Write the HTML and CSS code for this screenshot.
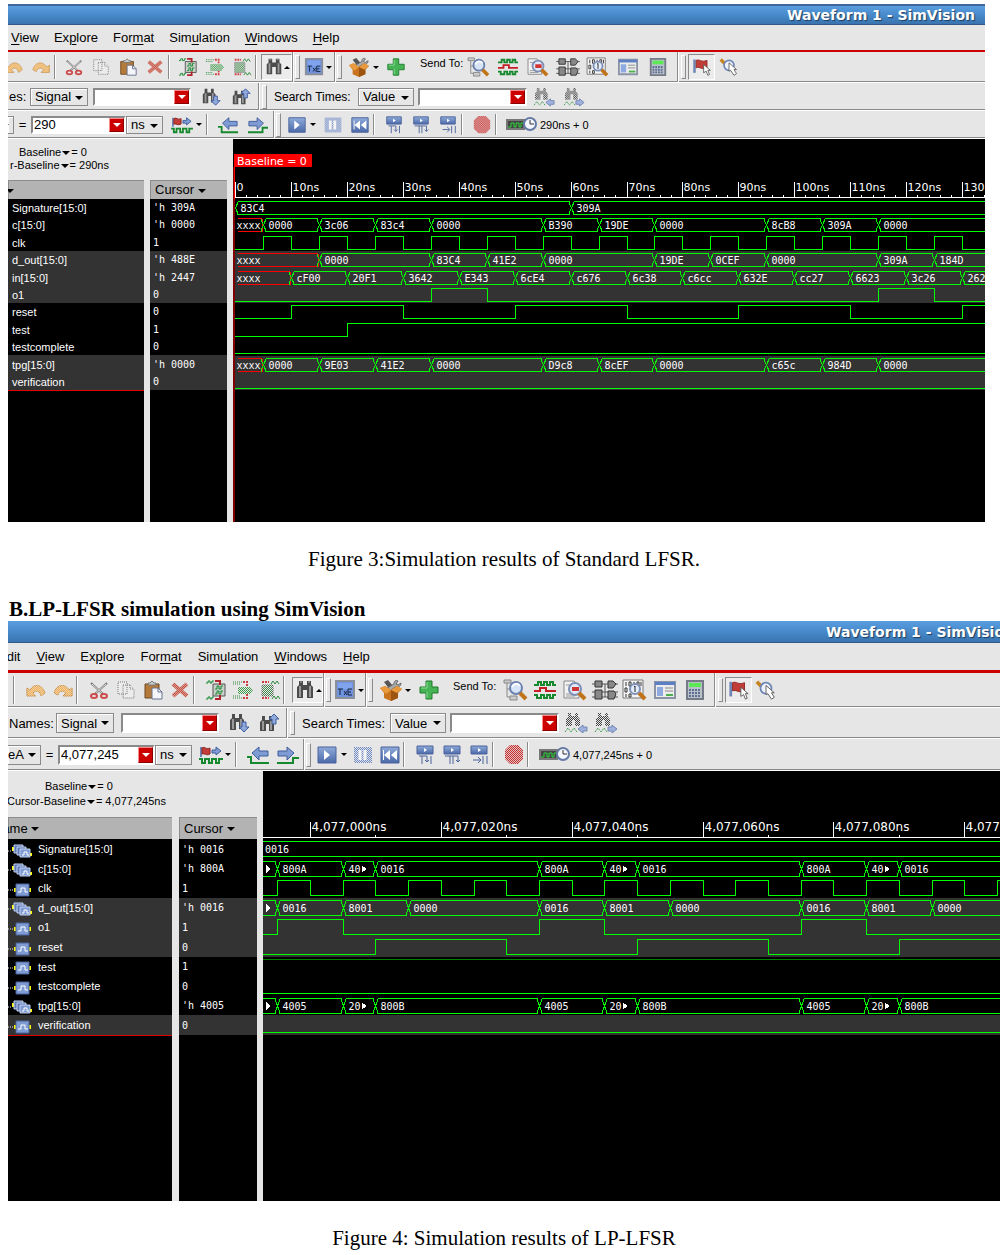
FILE: index.html
```html
<!DOCTYPE html>
<html lang="en">
<head>
<meta charset="utf-8">
<title>LFSR simulation results</title>
<link rel="stylesheet" href="styles.css">
</head>
<body>
<svg class="sprite" aria-hidden="true">
  <defs>
    <pattern id="dots" width="2" height="2" patternUnits="userSpaceOnUse"><path d="M0 0h1v1h-1zM1 1h1v1h-1z" fill="#e6e6e6"/></pattern>
    <linearGradient id="blue" x2="0" y2="1"><stop stop-color="#8fabda"/><stop offset="1" stop-color="#4b69a8"/></linearGradient>
  </defs>
  <symbol id="undo" viewBox="0 0 22 22"><path d="M2 17V9l3 2c3-6 12-7 15 3l-4 3c-1-5-5-6-8-3l3 3z" fill="#f2b45c" stroke="#c98a3c"/><path d="M2 5h19v13H2z" fill="url(#dots)" opacity=".5"/></symbol>
  <symbol id="redo" viewBox="0 0 22 22"><path d="M20 17V9l-3 2C14 5 5 4 2 14l4 2c1-4 5-5 8-2l-3 3z" fill="#f2b45c" stroke="#c98a3c"/><path d="M1 5h19v13H1z" fill="url(#dots)" opacity=".5"/></symbol>
  <symbol id="cut" viewBox="0 0 22 22"><path d="M3 4l12 11M19 4L7 15" stroke="#777" stroke-width="2"/><path d="M4 5l10 9M18 5L8 14" stroke="#ddd"/><ellipse cx="6" cy="17" rx="3" ry="2" fill="none" stroke="#cc4c4c" stroke-width="2"/><ellipse cx="16" cy="17" rx="3" ry="2" fill="none" stroke="#cc4c4c" stroke-width="2"/></symbol>
  <symbol id="copy" viewBox="0 0 22 22"><g fill="#ececec" stroke="#777" stroke-dasharray="1 1"><path d="M3 3h9v12H3zM8 6h7l4 4v9H8z"/><path d="M15 6v4h4"/></g></symbol>
  <symbol id="paste" viewBox="0 0 22 22"><path d="M3 5h14v14H3z" fill="#b47a3c" stroke="#6f4a22"/><path d="M6 6V4h2l2-2 2 2h2v2z" fill="#ccc" stroke="#777"/><path d="M10 9h6l4 4v7H10z" fill="#f4f6fb" stroke="#66728c"/><path d="M16 9v4h4" fill="none" stroke="#66728c"/></symbol>
  <symbol id="del" viewBox="0 0 22 22"><path d="M4 5l14 12M18 5L4 17" stroke="#c8503f" stroke-width="4"/><path d="M2 2h18v18H2z" fill="url(#dots)" opacity=".5"/></symbol>
  <symbol id="wave-in" viewBox="0 0 22 22"><path d="M8 5h12v12H8z" fill="#c9cfc9" stroke="#555"/><path d="M10 10h2V7h2v3h2V7h2M10 15h2v-3h2v3h2v-3h2M1 4h2V2h2v2h2V2h2M1 20h2v-2h2v2h2v-2h2" fill="none" stroke="#128a2c"/><path d="M10 2h5v4M10 20h5v-4" fill="none" stroke="#b3202a" stroke-width="2"/></symbol>
  <symbol id="wave-mid" viewBox="0 0 22 22"><path d="M1 3h9M1 5h8M1 17h8M1 19h9" stroke="#2d8a3c" stroke-dasharray="1 1"/><path d="M11 3h4v4M11 19h4v-4" fill="none" stroke="#cf3e3e" stroke-width="2" stroke-dasharray="2 1"/><path d="M6 8h12l3 3-3 4H6z" fill="#3f9b4a"/><path d="M6 8h15v7H6z" fill="url(#dots)"/></symbol>
  <symbol id="wave-out" viewBox="0 0 22 22"><path d="M3 6h11v11H3z" fill="#3f8a4a" stroke="#555"/><path d="M1 5h14v13H1z" fill="url(#dots)"/><path d="M3 3h7M3 19h7" stroke="#cf3e3e" stroke-width="2" stroke-dasharray="2 1"/><path d="M12 5l2-3 2 3 2-3 2 3M13 20l2-3 2 3 2-3 2 3" fill="none" stroke="#2d8a3c"/></symbol>
  <symbol id="binoc" viewBox="0 0 22 22"><path d="M5 2h4v4h4V2h4v4l2 2v11h-6v-8H9v8H3V8l2-2z" fill="#4c4c4c"/><path d="M6 7v11M16 7v11" stroke="#999" stroke-width="2"/><path d="M6 3h2M14 3h2" stroke="#aaa"/></symbol>
  <symbol id="txe" viewBox="0 0 22 22"><path d="M2 2h18v17H2z" fill="#6f93df" stroke="#8a8f9a" stroke-width="2"/><path d="M4 4h14v6H4z" fill="#7fa3ec"/><path d="M4 10h5M6 10v6M10 12l3 4M13 12l-3 4M18 10h-4v6h4M14 13h3" stroke="#16233f" fill="none"/></symbol>
  <symbol id="box" viewBox="0 0 24 22"><path d="M5 3l4-2 5 6-3 4z" fill="#555"/><path d="M8 9l7-4c0-4 3-4 4-3l-2 3 2 1 3-2c0 4-4 5-6 4l-6 5z" fill="#aaa" stroke="#666"/><path d="M1 9l5-2 6 4 6-4 5 3-4 4v5l-7 3-7-3v-5z" fill="#c9731c"/><path d="M12 11v11l7-3v-7z" fill="#9c5410"/><path d="M1 9l5-2 6 4-5 4zM23 10l-5-3-6 4 6 3z" fill="#e99a3c"/></symbol>
  <symbol id="plus" viewBox="0 0 22 22"><path d="M8 2h6v6h6v6h-6v6H8v-6H2V8h6z" fill="#46b454" stroke="#1d7a2b"/><path d="M9 13v6M9 3v6H3" fill="none" stroke="#8fdc98"/></symbol>
  <symbol id="tree" viewBox="0 0 26 22"><path d="M2 1h7v3H2zM8 17h7v4H8z" fill="#ccc" stroke="#888"/><path d="M5 4v14h3M5 10h4" fill="none" stroke="#888"/><circle cx="14" cy="9" r="6" fill="#d7e4f7" stroke="#6b82b0" stroke-width="2"/><path d="M10 8c2-4 6-4 8-1" stroke="#fff" stroke-width="2" fill="none"/><path d="M18 14l6 6" stroke="#c07318" stroke-width="4"/></symbol>
  <symbol id="waves" viewBox="0 0 26 22"><path d="M2 6h4V3h3v3h3V3h3v3h3V3h3v3h3M2 16h3v3h4v-3h3v3h3v-3h3v3h3v-3h3" fill="none" stroke="#16882e" stroke-width="2"/><path d="M2 12h6V9h6v3h10" fill="none" stroke="#c32025" stroke-width="2"/></symbol>
  <symbol id="docfind" viewBox="0 0 26 22"><path d="M2 2h10l5 5v12H2z" fill="#f2f2f2" stroke="#888"/><path d="M4 6h6M4 15h11M4 17h9" stroke="#999"/><circle cx="13" cy="10" r="6" fill="#dfe9f9" stroke="#7d8fb5" stroke-width="2"/><path d="M10 9h7M10 11h7" stroke="#cf3535" stroke-width="2"/><path d="M17 14l6 6" stroke="#c07318" stroke-width="4"/></symbol>
  <symbol id="schem" viewBox="0 0 26 22"><path d="M0 5h26M0 13h26M0 18h26M13 5v13" stroke="#555"/><g fill="#888" stroke="#333"><path d="M3 2h7v6H3zM16 2h5l3 3-3 4h-5zM3 11h7v9H3zM16 12h6l2 3-2 5h-6z"/></g></symbol>
  <symbol id="bits" viewBox="0 0 26 22"><path d="M1 1h20v18H1z" fill="#f4f4f4" stroke="#777"/><path d="M4 3v4M7 3h2v4H7zM12 3v4M15 3h2v4h-2zM19 3v4M3 9h2v4H3zM4 15v3M7 15h2v3H7z" fill="none" stroke="#333"/><circle cx="13" cy="10" r="5" fill="#e4edfb" stroke="#7d8fb5" stroke-width="2"/><path d="M12 8l1-1v6" fill="none" stroke="#222"/><path d="M17 14l6 6" stroke="#c07318" stroke-width="4"/></symbol>
  <symbol id="list" viewBox="0 0 26 22"><path d="M3 3h20v16H3z" fill="#ececec" stroke="#8a93a5" stroke-width="2"/><path d="M3 3h20v3H3z" fill="#5b7ec4"/><path d="M5 8h6v9H5z" fill="#8faae0"/><path d="M13 9h8M13 12h8" stroke="#888"/><path d="M14 16h7" stroke="#4bb04b" stroke-width="2"/></symbol>
  <symbol id="calc" viewBox="0 0 26 22"><path d="M5 2h16v18H5z" fill="#b9c0ca" stroke="#747b86" stroke-width="2"/><path d="M7 4h12v4H7z" fill="#5bea55"/><path d="M7 11h12M7 14h12M7 17h12" stroke="#5d6f92" stroke-width="2" stroke-dasharray="2 1"/></symbol>
  <symbol id="flag" viewBox="0 0 24 22"><path d="M3 2v16" stroke="#6d86b5" stroke-width="3"/><path d="M5 3c4-2 6 3 13 0v9c-6 3-9-2-13 0z" fill="#c33d38" stroke="#8c2521"/><path d="M14 8v10l3-2 2 5 2-1-2-5h3z" fill="#fff" stroke="#555"/></symbol>
  <symbol id="magcur" viewBox="0 0 24 22"><path d="M2 2l5 5" stroke="#c78420" stroke-width="4"/><circle cx="12" cy="9" r="6" fill="#eef3fb" stroke="#6d86b5" stroke-width="2"/><path d="M12 6v10l2-1 4 6 3-2-3-5h3z" fill="#fff" stroke="#555"/></symbol>
  <symbol id="find-down" viewBox="0 0 22 22"><path d="M4 2h3v4h4V2h3v4l2 2v9h-5v-7H8v8H2V8l2-2z" fill="#4c4c4c"/><path d="M5 7v10M13 7v9" stroke="#999" stroke-width="2"/><path d="M14 10h4v5h3l-5 5-5-5h3z" fill="#8fa9dd" stroke="#3f5d9b"/></symbol>
  <symbol id="find-up" viewBox="0 0 22 22"><path d="M4 4h3v4h4V4h3v4l2 2v9h-5v-7H8v7H2v-9l2-2z" fill="#4c4c4c"/><path d="M5 9v9M13 9v9" stroke="#999" stroke-width="2"/><path d="M14 12h4V7h3l-5-5-5 5h3z" fill="#8fa9dd" stroke="#3f5d9b"/></symbol>
  <symbol id="find-prev" viewBox="0 0 26 22"><path d="M4 1h3v3h4V1h3v4l2 2v7h-5V8H8v6H2V7l2-2z" fill="#444"/><path d="M1 0h16v15H1z" fill="url(#dots)"/><path d="M1 20l3-4 3 4 3-4 3 4" fill="none" stroke="#3f9b4a" stroke-dasharray="2 1"/><path d="M14 17l5-4v2h4v4h-4v2z" fill="#9fb1dc" stroke="#7488b5"/></symbol>
  <symbol id="find-next" viewBox="0 0 26 22"><path d="M4 1h3v3h4V1h3v4l2 2v7h-5V8H8v6H2V7l2-2z" fill="#444"/><path d="M1 0h16v15H1z" fill="url(#dots)"/><path d="M1 20l3-4 3 4 3-4 3 4" fill="none" stroke="#3f9b4a" stroke-dasharray="2 1"/><path d="M23 17l-5-4v2h-4v4h4v2z" fill="#9fb1dc" stroke="#7488b5"/></symbol>
  <symbol id="marker" viewBox="0 0 26 22"><path d="M3 3v10" stroke="#6d86b5" stroke-width="2"/><path d="M4 4c3-2 4 2 8 0v6c-4 2-5-1-8 0z" fill="#c33d38" stroke="#8c2521"/><path d="M14 6h4V3l5 4-5 4V9h-4z" fill="#7f9bd3" stroke="#3f5d9b"/><path d="M1 15h3v4h3v-4h4v4h3v-4h4v4h3v-4h4" fill="none" stroke="#16882e" stroke-width="2"/></symbol>
  <symbol id="edge-left" viewBox="0 0 26 22"><path d="M2 13h4v6h18" fill="none" stroke="#16882e" stroke-width="2"/><path d="M7 9l7-6v4h9v5h-9v4z" fill="#7f9bd3" stroke="#3f5d9b"/></symbol>
  <symbol id="edge-right" viewBox="0 0 26 22"><path d="M2 19h16v-5h6" fill="none" stroke="#16882e" stroke-width="2"/><path d="M19 9l-7-6v4H3v5h9v4z" fill="#7f9bd3" stroke="#3f5d9b"/></symbol>
  <symbol id="play" viewBox="0 0 22 22"><path d="M2 3h18v16H2z" fill="url(#blue)" stroke="#4a629b"/><path d="M8 6l6 5-6 5z" fill="#fff"/></symbol>
  <symbol id="pause" viewBox="0 0 22 22"><path d="M2 3h18v16H2z" fill="#6c88c6"/><path d="M2 3h18v16H2z" fill="url(#dots)"/><path d="M8 6v10M13 6v10" stroke="#f4f4f4" stroke-width="3"/></symbol>
  <symbol id="rewind" viewBox="0 0 22 22"><path d="M2 3h18v16H2z" fill="url(#blue)" stroke="#4a629b"/><path d="M11 6v10l-6-5zM18 6v10l-6-5zM4 6h1v10H4z" fill="#fff"/></symbol>
  <symbol id="step-into" viewBox="0 0 22 22"><path d="M3 2h16v8H3z" fill="url(#blue)" stroke="#4a629b"/><path d="M10 4l3 2-3 2z" fill="#fff"/><path d="M5 12h8v6M8 12v8M17 12v8M11 16l2 2 2-2" fill="none" stroke="#4a629b"/></symbol>
  <symbol id="step-over" viewBox="0 0 22 22"><path d="M3 2h16v8H3z" fill="url(#blue)" stroke="#4a629b"/><path d="M10 4l3 2-3 2z" fill="#fff"/><path d="M4 12h13v6M9 12v8M12 12v8M15 16l2 2 2-2" fill="none" stroke="#4a629b"/></symbol>
  <symbol id="step-out" viewBox="0 0 22 22"><path d="M3 2h16v8H3z" fill="url(#blue)" stroke="#4a629b"/><path d="M10 4l3 2-3 2z" fill="#fff"/><path d="M5 16h7M10 13l3 3-3 3M15 12v8M19 12v8" fill="none" stroke="#4a629b"/></symbol>
  <symbol id="stop" viewBox="0 0 22 22"><path d="M7 1h8l5 5v9l-5 5H7l-5-5V6z" fill="#c93030"/><path d="M1 1h20v20H1z" fill="url(#dots)" opacity=".8"/></symbol>
  <symbol id="timer" viewBox="0 0 32 18"><path d="M1 4h17v9H1z" fill="#444" stroke="#777" stroke-width="2"/><path d="M2 11h3V7h3v4h2V7h3v4h2V7h3" fill="none" stroke="#2dd53a"/><circle cx="24" cy="8" r="6" fill="#f3f6fc" stroke="#6579a5" stroke-width="2"/><path d="M24 4v4h4" fill="none" stroke="#333"/></symbol>
  <symbol id="sig-wire" viewBox="0 0 26 14"><path d="M0 7h6" stroke="#ddd" stroke-dasharray="1 1"/><path d="M6 5h2v4H6zM21 5h2v4h-2z" fill="#ff0"/><path d="M8 1h13v12H8z" fill="#7f9bd3" stroke="#4a629b"/><path d="M10 9h3V5h4v4h3" fill="none" stroke="#fff"/></symbol>
  <symbol id="sig-bus" viewBox="0 0 26 14"><path d="M0 7h4" stroke="#ddd" stroke-dasharray="1 1"/><path d="M4 3h2v4H4zM22 9h2v3h-2z" fill="#ff0"/><path d="M6 1h9v8H6z" fill="#5c78b5" stroke="#c4d2f0"/><path d="M9 3h9v8H9z" fill="#5c78b5" stroke="#c4d2f0"/><path d="M12 5h10v8H12z" fill="#7f9bd3" stroke="#c4d2f0"/><path d="M14 11h2V8h3v3h2" fill="none" stroke="#fff"/></symbol>
</svg>

<main>
<figure class="shot first">
  <section class="window" aria-label="Standard LFSR waveform window">
    <header class="titlebar"><h2>Waveform 1 - SimVision</h2></header>
    <nav class="menu">
      <button><u>V</u>iew</button><button>Ex<u>p</u>lore</button><button>For<u>m</u>at</button><button>Sim<u>u</u>lation</button><button><u>W</u>indows</button><button><u>H</u>elp</button>
    </nav>
    <div class="bar main-bar">
      <button class="tool" aria-label="Undo"><svg><use href="#undo"/></svg></button>
      <button class="tool" aria-label="Redo"><svg><use href="#redo"/></svg></button>
      <i class="sep"></i>
      <button class="tool" aria-label="Cut"><svg><use href="#cut"/></svg></button>
      <button class="tool" aria-label="Copy"><svg><use href="#copy"/></svg></button>
      <button class="tool" aria-label="Paste"><svg><use href="#paste"/></svg></button>
      <button class="tool" aria-label="Delete"><svg><use href="#del"/></svg></button>
      <i class="sep"></i>
      <button class="tool" aria-label="Group waves"><svg><use href="#wave-in"/></svg></button>
      <button class="tool" aria-label="Merge waves"><svg><use href="#wave-mid"/></svg></button>
      <button class="tool" aria-label="Ungroup waves"><svg><use href="#wave-out"/></svg></button>
      <i class="sep"></i>
      <button class="tool pressed find" aria-label="Find"><svg><use href="#binoc"/></svg><i class="tri up"></i></button>
      <i class="grip"></i>
      <button class="tool drop" aria-label="Text"><svg><use href="#txe"/></svg><i class="tri small"></i></button>
      <i class="grip"></i>
      <button class="tool kit" aria-label="Tools"><svg><use href="#box"/></svg><i class="tri small"></i></button>
      <button class="tool" aria-label="Add"><svg><use href="#plus"/></svg></button>
      <span class="send">Send To:</span>
      <button class="tool wide" aria-label="Design browser"><svg><use href="#tree"/></svg></button>
      <button class="tool wide" aria-label="Waveform"><svg><use href="#waves"/></svg></button>
      <button class="tool wide" aria-label="Source browser"><svg><use href="#docfind"/></svg></button>
      <button class="tool wide" aria-label="Schematic"><svg><use href="#schem"/></svg></button>
      <button class="tool wide" aria-label="Memory viewer"><svg><use href="#bits"/></svg></button>
      <button class="tool wide" aria-label="Watch"><svg><use href="#list"/></svg></button>
      <button class="tool wide" aria-label="Calculator"><svg><use href="#calc"/></svg></button>
      <i class="grip spaced"></i>
      <button class="tool pressed" aria-label="Select mode"><svg><use href="#flag"/></svg></button>
      <button class="tool" aria-label="Zoom mode"><svg><use href="#magcur"/></svg></button>
    </div>
    <div class="bar search-bar">
      <label class="lead" for="a-kind">es:</label>
      <span class="pick kind"><select id="a-kind"><option>Signal</option></select></span>
      <span class="combo names"><input type="text" aria-label="Names"><button aria-label="Name history"></button></span>
      <button class="tool search" aria-label="Find next name"><svg><use href="#find-down"/></svg></button>
      <button class="tool search" aria-label="Find previous name"><svg><use href="#find-up"/></svg></button>
      <i class="grip spaced"></i>
      <label class="times" for="a-value">Search Times:</label>
      <span class="pick value"><select id="a-value"><option>Value</option></select></span>
      <span class="combo find-value"><input type="text" aria-label="Value"><button aria-label="Value history"></button></span>
      <button class="tool wide" aria-label="Previous time"><svg><use href="#find-prev"/></svg></button>
      <button class="tool wide" aria-label="Next time"><svg><use href="#find-next"/></svg></button>
    </div>
    <div class="bar time-bar">
      <span class="pick marker"><select aria-label="Cursor"><option></option></select></span>
      <span class="equals">=</span>
      <span class="combo time"><input type="text" aria-label="Cursor time" value="290"><button aria-label="Time history"></button></span>
      <span class="pick unit"><select aria-label="Unit"><option>ns</option></select></span>
      <button class="tool mark" aria-label="Markers"><svg><use href="#marker"/></svg><i class="tri small"></i></button>
      <i class="sep"></i>
      <button class="tool wide" aria-label="Previous edge"><svg><use href="#edge-left"/></svg></button>
      <button class="tool wide" aria-label="Next edge"><svg><use href="#edge-right"/></svg></button>
      <i class="grip"></i>
      <button class="tool run" aria-label="Run"><svg><use href="#play"/></svg><i class="tri small"></i></button>
      <button class="tool" aria-label="Pause"><svg><use href="#pause"/></svg></button>
      <button class="tool" aria-label="Reset"><svg><use href="#rewind"/></svg></button>
      <i class="sep"></i>
      <button class="tool" aria-label="Step into"><svg><use href="#step-into"/></svg></button>
      <button class="tool" aria-label="Step over"><svg><use href="#step-over"/></svg></button>
      <button class="tool" aria-label="Step out"><svg><use href="#step-out"/></svg></button>
      <i class="sep"></i>
      <button class="tool" aria-label="Stop"><svg><use href="#stop"/></svg></button>
      <i class="sep"></i>
      <svg class="timer" aria-hidden="true"><use href="#timer"/></svg>
      <output>290ns + 0</output>
    </div>
    <div class="panes">
      <div class="side">
        <div class="info"><p class="base">Baseline<i class="tri small"></i>= 0</p><p class="delta">r-Baseline<i class="tri small"></i>= 290ns</p></div>
        <table>
          <thead><tr><th class="name"><span><i class="tri"></i></span></th><th class="cursor">Cursor <i class="tri"></i></th></tr></thead>
          <tbody>
            <tr><td>Signature[15:0]</td><td>'h 309A</td></tr>
            <tr><td>c[15:0]</td><td>'h 0000</td></tr>
            <tr><td>clk</td><td>1</td></tr>
            <tr><td>d_out[15:0]</td><td>'h 488E</td></tr>
            <tr><td>in[15:0]</td><td>'h 2447</td></tr>
            <tr><td>o1</td><td>0</td></tr>
            <tr><td>reset</td><td>0</td></tr>
            <tr><td>test</td><td>1</td></tr>
            <tr><td>testcomplete</td><td>0</td></tr>
            <tr><td>tpg[15:0]</td><td>'h 0000</td></tr>
            <tr><td>verification</td><td>0</td></tr>
          </tbody>
          <tfoot><tr><td></td><td></td></tr></tfoot>
        </table>
      </div>
      <svg class="wave" id="wave-standard" role="img" aria-label="Standard LFSR signals"></svg>
    </div>
  </section>
  <figcaption>Figure 3:Simulation results of Standard LFSR.</figcaption>
</figure>

<h1>B.LP-LFSR simulation using SimVision</h1>

<figure class="shot second">
  <section class="window" aria-label="LP-LFSR waveform window">
    <header class="titlebar"><h2>Waveform 1 - SimVision</h2></header>
    <nav class="menu">
      <button><u>E</u>dit</button><button><u>V</u>iew</button><button>Ex<u>p</u>lore</button><button>For<u>m</u>at</button><button>Sim<u>u</u>lation</button><button><u>W</u>indows</button><button><u>H</u>elp</button>
    </nav>
    <div class="bar main-bar">
      <i class="sep"></i>
      <button class="tool" aria-label="Undo"><svg><use href="#undo"/></svg></button>
      <button class="tool" aria-label="Redo"><svg><use href="#redo"/></svg></button>
      <i class="sep"></i>
      <button class="tool" aria-label="Cut"><svg><use href="#cut"/></svg></button>
      <button class="tool" aria-label="Copy"><svg><use href="#copy"/></svg></button>
      <button class="tool" aria-label="Paste"><svg><use href="#paste"/></svg></button>
      <button class="tool" aria-label="Delete"><svg><use href="#del"/></svg></button>
      <i class="sep"></i>
      <button class="tool" aria-label="Group waves"><svg><use href="#wave-in"/></svg></button>
      <button class="tool" aria-label="Merge waves"><svg><use href="#wave-mid"/></svg></button>
      <button class="tool" aria-label="Ungroup waves"><svg><use href="#wave-out"/></svg></button>
      <i class="sep"></i>
      <button class="tool pressed find" aria-label="Find"><svg><use href="#binoc"/></svg><i class="tri up"></i></button>
      <i class="grip"></i>
      <button class="tool drop" aria-label="Text"><svg><use href="#txe"/></svg><i class="tri small"></i></button>
      <i class="grip"></i>
      <button class="tool kit" aria-label="Tools"><svg><use href="#box"/></svg><i class="tri small"></i></button>
      <button class="tool" aria-label="Add"><svg><use href="#plus"/></svg></button>
      <span class="send">Send To:</span>
      <button class="tool wide" aria-label="Design browser"><svg><use href="#tree"/></svg></button>
      <button class="tool wide" aria-label="Waveform"><svg><use href="#waves"/></svg></button>
      <button class="tool wide" aria-label="Source browser"><svg><use href="#docfind"/></svg></button>
      <button class="tool wide" aria-label="Schematic"><svg><use href="#schem"/></svg></button>
      <button class="tool wide" aria-label="Memory viewer"><svg><use href="#bits"/></svg></button>
      <button class="tool wide" aria-label="Watch"><svg><use href="#list"/></svg></button>
      <button class="tool wide" aria-label="Calculator"><svg><use href="#calc"/></svg></button>
      <i class="grip spaced"></i>
      <button class="tool pressed" aria-label="Select mode"><svg><use href="#flag"/></svg></button>
      <button class="tool" aria-label="Zoom mode"><svg><use href="#magcur"/></svg></button>
    </div>
    <div class="bar search-bar">
      <label class="lead" for="b-kind">Names:</label>
      <span class="pick kind"><select id="b-kind"><option>Signal</option></select></span>
      <span class="combo names"><input type="text" aria-label="Names"><button aria-label="Name history"></button></span>
      <button class="tool search" aria-label="Find next name"><svg><use href="#find-down"/></svg></button>
      <button class="tool search" aria-label="Find previous name"><svg><use href="#find-up"/></svg></button>
      <i class="grip spaced"></i>
      <label class="times" for="b-value">Search Times:</label>
      <span class="pick value"><select id="b-value"><option>Value</option></select></span>
      <span class="combo find-value"><input type="text" aria-label="Value"><button aria-label="Value history"></button></span>
      <button class="tool wide" aria-label="Previous time"><svg><use href="#find-prev"/></svg></button>
      <button class="tool wide" aria-label="Next time"><svg><use href="#find-next"/></svg></button>
    </div>
    <div class="bar time-bar">
      <span class="pick marker"><select aria-label="Cursor"><option>eA</option></select></span>
      <span class="equals">=</span>
      <span class="combo time"><input type="text" aria-label="Cursor time" value="4,077,245"><button aria-label="Time history"></button></span>
      <span class="pick unit"><select aria-label="Unit"><option>ns</option></select></span>
      <button class="tool mark" aria-label="Markers"><svg><use href="#marker"/></svg><i class="tri small"></i></button>
      <i class="sep"></i>
      <button class="tool wide" aria-label="Previous edge"><svg><use href="#edge-left"/></svg></button>
      <button class="tool wide" aria-label="Next edge"><svg><use href="#edge-right"/></svg></button>
      <i class="grip"></i>
      <button class="tool run" aria-label="Run"><svg><use href="#play"/></svg><i class="tri small"></i></button>
      <button class="tool" aria-label="Pause"><svg><use href="#pause"/></svg></button>
      <button class="tool" aria-label="Reset"><svg><use href="#rewind"/></svg></button>
      <i class="sep"></i>
      <button class="tool" aria-label="Step into"><svg><use href="#step-into"/></svg></button>
      <button class="tool" aria-label="Step over"><svg><use href="#step-over"/></svg></button>
      <button class="tool" aria-label="Step out"><svg><use href="#step-out"/></svg></button>
      <i class="sep"></i>
      <button class="tool" aria-label="Stop"><svg><use href="#stop"/></svg></button>
      <i class="sep"></i>
      <svg class="timer" aria-hidden="true"><use href="#timer"/></svg>
      <output>4,077,245ns + 0</output>
    </div>
    <div class="panes">
      <div class="side">
        <div class="info"><p class="base">Baseline<i class="tri small"></i>= 0</p><p class="delta">Cursor-Baseline<i class="tri small"></i>= 4,077,245ns</p></div>
        <table>
          <thead><tr><th class="name"><span>Name <i class="tri"></i></span></th><th class="cursor">Cursor <i class="tri"></i></th></tr></thead>
          <tbody>
            <tr><td><svg class="sig"><use href="#sig-bus"/></svg>Signature[15:0]</td><td>'h 0016</td></tr>
            <tr><td><svg class="sig"><use href="#sig-bus"/></svg>c[15:0]</td><td>'h 800A</td></tr>
            <tr><td><svg class="sig"><use href="#sig-wire"/></svg>clk</td><td>1</td></tr>
            <tr><td><svg class="sig"><use href="#sig-bus"/></svg>d_out[15:0]</td><td>'h 0016</td></tr>
            <tr><td><svg class="sig"><use href="#sig-wire"/></svg>o1</td><td>1</td></tr>
            <tr><td><svg class="sig"><use href="#sig-wire"/></svg>reset</td><td>0</td></tr>
            <tr><td><svg class="sig"><use href="#sig-wire"/></svg>test</td><td>1</td></tr>
            <tr><td><svg class="sig"><use href="#sig-wire"/></svg>testcomplete</td><td>0</td></tr>
            <tr><td><svg class="sig"><use href="#sig-bus"/></svg>tpg[15:0]</td><td>'h 4005</td></tr>
            <tr><td><svg class="sig"><use href="#sig-wire"/></svg>verification</td><td>0</td></tr>
          </tbody>
          <tfoot><tr><td></td><td></td></tr></tfoot>
        </table>
      </div>
      <svg class="wave" id="wave-lowpower" role="img" aria-label="LP-LFSR signals"></svg>
    </div>
  </section>
  <figcaption>Figure 4: Simulation results of LP-LFSR</figcaption>
</figure>
</main>
<script src="waves.js"></script>
</body>
</html>
```

FILE: styles.css
```css
* { box-sizing: border-box; }
body {
  margin: 0;
  padding: 4px 5px 5px 8px;
  background: #fff;
  color: #000;
  font-family: "Liberation Serif", serif;
}
h1, h2, p { margin: 0; }
h1 { margin-top: 26px; padding-left: 1px; font-size: 21px; line-height: 24px; }
.sprite { position: absolute; width: 0; height: 0; }
.shot { margin: 0; }
.shot figcaption { margin-top: 25px; text-align: center; font-size: 21px; line-height: 24px; }
.first .window { margin-right: 15px; }

/* Settings of the two window sizes */
.first {
  --title: 21px; --menu: 27px; --rule: 2px; --menu-gap: 15px; --menu-pad: 3px;
  --bar1: 31px; --bar2: 28px; --bar3: 28px; --field: 18px; --tool: 20px;
  --sep: 6px; --time-sep: 7px; --info: 41px; --head: 19px; --row: 17px; --rest: 132px;
  --name-col: 142px; --cursor-col: 83px; --name-pad: 4px;
}
.second {
  --title: 22px; --menu: 30px; --rule: 3px; --menu-gap: 16px; --menu-pad: -10px;
  --bar1: 35px; --bar2: 31px; --bar3: 32px; --field: 20px; --tool: 22px;
  --sep: 9px; --time-sep: 8px; --info: 46px; --head: 22px; --row: 19px; --rest: 166px;
  --name-col: 171px; --cursor-col: 84px; --name-pad: 0;
}

.window {
  overflow: hidden;
  background: #e6e6e6;
  font-family: "Liberation Sans", sans-serif;
  font-size: 13px;
  white-space: nowrap;
}
button, select, input { margin: 0; padding: 0; border: 0; border-radius: 0; background: none; color: inherit; font: inherit; }
.titlebar {
  display: flex;
  align-items: center;
  justify-content: flex-end;
  height: var(--title);
  background: linear-gradient(#5a9ee0, #4486c6 60%, #3a74ae);
  border-bottom: 1px solid #35588a;
}
.first .titlebar { border-top: 2px solid #41679a; }
.titlebar h2 {
  width: 198px;
  color: #fff;
  font: bold 14px/18px "DejaVu Sans", sans-serif;
  text-shadow: 1px 1px 1px #1d3c60;
}
.second .titlebar h2 { width: 174px; }
.menu {
  display: flex;
  align-items: center;
  gap: var(--menu-gap);
  height: var(--menu);
  border-bottom: var(--rule) solid #cc0000;
}
.menu button:first-child { margin-left: var(--menu-pad); }
.menu u { text-underline-offset: 2px; }

.bar {
  display: flex;
  align-items: center;
  border-bottom: 1px solid #fff;
  box-shadow: inset 0 -1px #8a8a8a;
}
.main-bar { height: var(--bar1); }
.search-bar { height: var(--bar2); }
.time-bar { height: var(--bar3); }
.second .main-bar { padding-left: 5px; }
.bar > * { flex: none; }
.tool { display: flex; align-items: center; justify-content: center; width: 27px; height: 26px; }
.tool svg { flex: none; width: var(--tool); height: var(--tool); }
.tool.wide { width: 30px; }
.tool.wide svg, .tool.mark svg { width: 26px; }
.first .main-bar .tool:first-child { margin-left: -8px; }
.tool.pressed { border: 1px solid; border-color: #8a8a8a #fff #fff #8a8a8a; background: #ececec; }
.tool.find { width: 31px; }
.tool.drop { width: 32px; gap: 2px; }
.tool.kit { width: 38px; gap: 2px; }
.second .tool.kit { width: 40px; }
.tool.kit svg { width: 24px; }
.tool.search { width: 30px; }
.tool.mark { width: 38px; gap: 1px; }
.tool.run { width: 36px; gap: 3px; }
.tri { display: inline-block; flex: none; border: 4px solid transparent; border-top-color: currentColor; border-bottom: 0; vertical-align: middle; }
.tri.small { border-width: 3px; border-bottom: 0; }
.tri.up { border: 3px solid transparent; border-bottom-color: currentColor; border-top: 0; }
.sep { align-self: stretch; width: var(--sep); margin: 3px 0; border-left: 1px solid #8a8a8a; box-shadow: inset 1px 0 #fff; }
.grip { display: flex; align-self: stretch; align-items: center; justify-content: center; width: 10px; border-left: 1px solid #8a8a8a; box-shadow: inset 1px 0 #fff; }
.grip::before { content: ""; width: 3px; height: 22px; border: 1px solid; border-color: #fff #8a8a8a #8a8a8a #fff; }
.grip.spaced { width: 11px; margin-left: 4px; }
.send { width: 54px; padding: 0 0 8px 11px; font-size: 11px; line-height: 13px; }
.second .send { width: 58px; }

.pick { position: relative; height: var(--field); border: 1px solid #8a8a8a; box-shadow: inset 1px 1px #fff; }
.pick::after { content: ""; position: absolute; right: 4px; top: 7px; border: 4px solid transparent; border-top-color: #000; border-bottom: 0; pointer-events: none; }
.pick select { display: block; width: 100%; height: 100%; padding-left: 4px; appearance: none; }
.combo { display: flex; height: var(--field); border: 2px solid; border-color: #8a8a8a #fff #fff #8a8a8a; background: #fff; }
.combo input { flex: 1; min-width: 0; padding-left: 1px; }
.combo button { display: flex; align-items: center; justify-content: center; width: 15px; border: 1px solid; border-color: #f88 #800 #800 #f88; background: #cc0000; }
.combo button::before { content: ""; border: 4px solid transparent; border-top-color: #fff; border-bottom: 0; }

.lead { width: 22px; padding-left: 1px; }
.second .lead { width: 48px; }
.kind { width: 58px; margin-right: 5px; }
.second .kind { margin-right: 7px; }
.names { width: 98px; margin-right: 5px; }
.search-bar .grip { margin-left: 2px; }
.times { width: 89px; padding-left: 5px; }
.first .times { font-size: 12px; }
.second .times { width: 93px; }
.value { width: 56px; margin-right: 4px; }
.find-value { width: 109px; margin-right: 3px; }

.marker { width: 6px; border-left: 0; }
.first .marker select { padding: 0; }
.second .marker { width: 33px; }
.second .marker select { padding: 0; }
.equals { width: 17px; text-align: center; }
.time { width: 95px; }
.second .time { width: 97px; }
.unit { width: 37px; }
.time-bar .tool.mark { margin: 0 2px 0 3px; }
.time-bar .sep { width: var(--time-sep); }
.timer { width: 32px; height: 18px; margin-left: 4px; }
output { padding-left: 2px; font-size: 11px; }

.panes { display: flex; background: #000; }
.side { flex: none; width: calc(var(--name-col) + var(--cursor-col)); background: #e6e6e6; }
.info { height: var(--info); padding-top: 7px; font-size: 11px; line-height: 13px; }
.info .tri { margin: 0 1px; border-width: 4px; border-bottom: 0; }
.base { padding-left: 11px; }
.delta { padding-left: 2px; }
.second .info { padding-top: 8px; line-height: 15px; }
.second .base { padding-left: 37px; }
.second .delta { margin-left: -1px; padding: 0; }
.side table { width: 100%; border-collapse: separate; border-spacing: 0; table-layout: fixed; }
.side th, .side td { padding: 0; border-right: 6px solid #e6e6e6; text-align: left; font-weight: normal; }
.side th { height: var(--head); padding-left: 5px; background: #b3b3b3; box-shadow: inset 1px 1px #8c8c8c; line-height: 15px; }
.side .name { width: var(--name-col); padding: 0; }
.second .side tr > :first-child { border-right-width: 7px; }
.second .name span { margin-left: -15px; }
.first .name span { margin-left: -2px; }
.side td { height: var(--row); background: #000; color: #fff; font-size: 11px; line-height: 15px; }
.side td:first-child { padding: 2px 0 0 var(--name-pad); }
.side td:last-child { padding: 1px 0 0 3px; font: 10px/12px "DejaVu Sans Mono", monospace; }
.first tbody tr:nth-child(5n+3) td, .first tbody tr:nth-child(5n+5) td,
.second tbody tr:nth-child(5n+1) td, .second tbody tr:nth-child(5n+3) td, .second tbody tr:nth-child(5n+5) td { height: calc(var(--row) + 1px); }
.side tbody tr:nth-child(6n+4) td, .side tbody tr:nth-child(6n+5) td, .side tbody tr:nth-child(6n+6) td { background: #333; }
.side tbody tr:nth-child(11) td { background: #333; }
.side tfoot td { height: var(--rest); }
.side tfoot td:first-child { background: linear-gradient(#e00000 1px, #000 1px); }
.sig { width: 26px; height: 14px; margin-right: 4px; vertical-align: middle; }

.wave { flex: 1; min-width: 0; width: 0; height: auto; overflow: hidden; shape-rendering: crispEdges; }
.wave text { fill: #fff; font: 10px "DejaVu Sans Mono", monospace; }
.wave .tick { font: 11px "DejaVu Sans", sans-serif; }
.second .wave .tick { font-size: 12px; }
.band { fill: #333; }
.axis { stroke: #fff; fill: none; }
.on { stroke: #00ff00; fill: none; }
.unknown { stroke: #ff0000; fill: none; }
.steady { stroke: #008000; fill: none; }
.baseline { fill: #ff0000; }
.baseline-stem { fill: #800000; }
```

FILE: waves.js
```js
// Draws the time axis and the signal traces of each waveform pane.
const NS = "http://www.w3.org/2000/svg";

function add(svg, tag, attrs, text) {
  const el = document.createElementNS(NS, tag);
  for (const key in attrs) el.setAttribute(key, attrs[key]);
  if (text !== undefined) el.textContent = text;
  svg.appendChild(el);
}

function draw(id, o) {
  const svg = document.getElementById(id);
  const X = t => Math.round(o.origin + t * o.scale) + 0.5;
  const rowTop = i => o.axis + 1 + Math.round(i * o.row);
  const end = 4000;

  o.bands.forEach(([from, to]) => add(svg, "rect", {
    class: "band", x: 0, y: rowTop(from), width: end, height: rowTop(to) - rowTop(from)
  }));

  let axis = `M0 ${o.axis - 0.5}H${end}`;
  o.ticks.forEach(([t, label]) => {
    axis += `M${X(t)} ${o.axis - 16}v16`;
    for (let m = t + o.minor; m < t + o.major; m += o.minor) axis += `M${X(m)} ${o.axis - 3}v3`;
    add(svg, "text", { class: "tick", x: X(t) + 1, y: o.axis - 7 }, label);
  });
  add(svg, "path", { class: "axis", d: axis });

  o.signals.forEach((s, i) => {
    const top = rowTop(i) + 2.5;
    const bottom = top + o.swing;
    const middle = (top + bottom) / 2;
    if (s.bus) {
      s.bus.forEach(([t, value], k) => {
        const next = s.bus[k + 1];
        const a = t === null ? -5 : X(t);
        const b = next ? X(next[0]) : end;
        const cls = value === "xxxx" ? "unknown" : "on";
        let d = `M${a + 2} ${top}H${b - 2}M${a + 2} ${bottom}H${b - 2}`;
        if (cls === "unknown") d += `M${b - 1} ${top}V${bottom}`;
        add(svg, "path", { class: cls, d });
        if (t !== null && cls === "on") {
          const h = middle - top - 2;
          add(svg, "path", { class: "on", d: `M${a - 2} ${top}v2l2 ${h}l-2 ${h}v2M${a + 2} ${top}v2l-2 ${h}l2 ${h}v2` });
        }
        const label = value.replace("▶", "");
        const x = t === null ? 2 : value === "xxxx" ? a + 1 : a + 5;
        if (label) add(svg, "text", { x, y: Math.round(bottom - o.lift) }, label);
        if (value.includes("▶")) {
          const ax = x + label.length * 6 + 1;
          add(svg, "path", { fill: "#fff", d: `M${ax} ${Math.round(middle) - 4}l5 4l-5 4z` });
        }
      });
    } else {
      let high = s.start;
      let d = `M0 ${high ? top : bottom}`;
      s.edges.forEach(t => {
        high = !high;
        d += `H${X(t)}V${high ? top : bottom}`;
      });
      add(svg, "path", { class: s.start && !s.edges.length ? "steady" : "on", d: d + `H${end}` });
    }
  });
}

function every(from, to, step) {
  const out = [];
  for (let t = from; t <= to; t += step) out.push(t);
  return out;
}

draw("wave-standard", {
  origin: 2, scale: 5.593, axis: 59, row: 17.4, swing: 13, lift: 3, major: 10, minor: 2,
  bands: [[3, 6], [9, 11]],
  ticks: every(0, 130, 10).map(t => [t, t ? t + "ns" : "0"]),
  signals: [
    { bus: [[0, "83C4"], [60, "309A"]] },
    { bus: [[0, "xxxx"], [5, "0000"], [15, "3c06"], [25, "83c4"], [35, "0000"], [55, "B390"], [65, "19DE"], [75, "0000"], [95, "8cB8"], [105, "309A"], [115, "0000"]] },
    { start: false, edges: every(5, 130, 5) },
    { bus: [[0, "xxxx"], [15, "0000"], [35, "83C4"], [45, "41E2"], [55, "0000"], [75, "19DE"], [85, "0CEF"], [95, "0000"], [115, "309A"], [125, "184D"]] },
    { bus: [[0, "xxxx"], [10, "cF00"], [20, "20F1"], [30, "3642"], [40, "E343"], [50, "6cE4"], [60, "c676"], [70, "6c38"], [80, "c6cc"], [90, "632E"], [100, "cc27"], [110, "6623"], [120, "3c26"], [130, "262"]] },
    { start: false, edges: [35, 45, 115, 125] },
    { start: false, edges: every(10, 130, 20) },
    { start: false, edges: [20] },
    { start: false, edges: [] },
    { bus: [[0, "xxxx"], [5, "0000"], [15, "9E03"], [25, "41E2"], [35, "0000"], [55, "D9c8"], [65, "8cEF"], [75, "0000"], [95, "c65c"], [105, "984D"], [115, "0000"]] },
    { start: false, edges: [] }
  ]
});

const standard = document.getElementById("wave-standard");
add(standard, "rect", { class: "baseline-stem", x: 0, y: 28, width: 2, height: 355 });
add(standard, "rect", { class: "baseline", x: 1, y: 15, width: 78, height: 13 });
add(standard, "rect", { class: "baseline", x: 1, y: 28, width: 1, height: 32 });
add(standard, "text", { class: "tick", x: 4, y: 26 }, "Baseline = 0");

draw("wave-lowpower", {
  origin: 47, scale: 6.543, axis: 67, row: 19.6, swing: 15, lift: 4, major: 20, minor: 10,
  bands: [[3, 6], [9, 10]],
  ticks: [[0, "4,077,000ns"], [20, "4,077,020ns"], [40, "4,077,040ns"], [60, "4,077,060ns"], [80, "4,077,080ns"], [100, "4,077,100ns"]],
  signals: [
    { bus: [[null, "0016"]] },
    { bus: [[null, "▶"], [-5, "800A"], [5, "40▶"], [10, "0016"], [35, "800A"], [45, "40▶"], [50, "0016"], [75, "800A"], [85, "40▶"], [90, "0016"]] },
    { start: false, edges: every(-5, 105, 5) },
    { bus: [[null, "▶"], [-5, "0016"], [5, "8001"], [15, "0000"], [35, "0016"], [45, "8001"], [55, "0000"], [75, "0016"], [85, "8001"], [95, "0000"]] },
    { start: false, edges: [-5, 5, 35, 45, 75, 85] },
    { start: false, edges: [10, 30, 50, 70, 90] },
    { start: true, edges: [] },
    { start: false, edges: [] },
    { bus: [[null, "▶"], [-5, "4005"], [5, "20▶"], [10, "800B"], [35, "4005"], [45, "20▶"], [50, "800B"], [75, "4005"], [85, "20▶"], [90, "800B"]] },
    { start: false, edges: [] }
  ]
});
```
